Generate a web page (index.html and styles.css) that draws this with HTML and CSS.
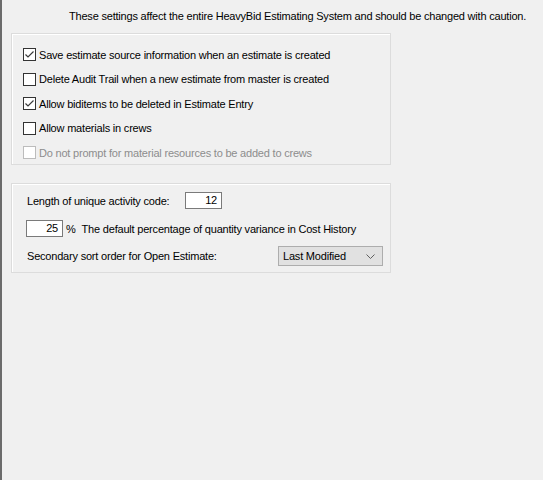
FILE: index.html
```html
<!DOCTYPE html>
<html>
<head>
<meta charset="utf-8">
<link rel="stylesheet" href="styles.css">
</head>
<body>
<div class="page">
  <div class="notice">These settings affect the entire HeavyBid Estimating System and should be changed with caution.</div>

  <div class="group group-checks">
    <label class="check"><span class="box checked"><svg width="11" height="11" viewBox="0 0 11 11"><path d="M1.5 5.5 L4 8 L9.5 2.5" fill="none" stroke="#3a3a3a" stroke-width="1.2"/></svg></span><span>Save estimate source information when an estimate is created</span></label>
    <label class="check"><span class="box"></span><span>Delete Audit Trail when a new estimate from master is created</span></label>
    <label class="check"><span class="box checked"><svg width="11" height="11" viewBox="0 0 11 11"><path d="M1.5 5.5 L4 8 L9.5 2.5" fill="none" stroke="#3a3a3a" stroke-width="1.2"/></svg></span><span>Allow biditems to be deleted in Estimate Entry</span></label>
    <label class="check"><span class="box"></span><span>Allow materials in crews</span></label>
    <label class="check disabled"><span class="box"></span><span>Do not prompt for material resources to be added to crews</span></label>
  </div>

  <div class="group group-fields">
    <div class="row row-code">
      <span class="label">Length of unique activity code:</span>
      <span class="textbox tb-code">12</span>
    </div>
    <div class="row row-pct">
      <span class="textbox tb-pct">25</span>
      <span class="pct">%</span>
      <span class="label">The default percentage of quantity variance in Cost History</span>
    </div>
    <div class="row row-sort">
      <span class="label">Secondary sort order for Open Estimate:</span>
      <span class="select">Last Modified<svg class="chev" width="9" height="5" viewBox="0 0 9 5"><path d="M0.5 0.5 L4.5 4.5 L8.5 0.5" fill="none" stroke="#606060" stroke-width="1"/></svg></span>
    </div>
  </div>
</div>
</body>
</html>
```

FILE: styles.css
```css
html, body {
  margin: 0;
  padding: 0;
  background: #f0f0f0;
}
body {
  font-family: "Liberation Sans", Arial, sans-serif;
  font-size: 11px;
  letter-spacing: -0.2px;
  color: #000;
}
.page {
  width: 541px;
  height: 480px;
  border-left: 2px solid #6b6b6b;
  box-sizing: border-box;
  padding-top: 9px;
}
.notice {
  padding-left: 67px;
  height: 14px;
  line-height: 14px;
  white-space: nowrap;
}
.group {
  margin-left: 9px;
  width: 380px;
  box-sizing: border-box;
  border: 1px solid #dcdcdc;
  box-shadow: inset 1px 1px 0 #fff;
}
.group-checks {
  margin-top: 10px;
  height: 132px;
  padding: 14px 0 0 11px;
}
.check {
  display: flex;
  align-items: center;
  height: 13px;
  margin-bottom: 11.5px;
  gap: 3px;
  white-space: nowrap;
}
.box {
  width: 13px;
  height: 13px;
  box-sizing: border-box;
  border: 1px solid #333;
  background: #fff;
  display: flex;
  align-items: center;
  justify-content: center;
}
.check.disabled {
  color: #8d8d8d;
}
.check.disabled .box {
  border-color: #bcbcbc;
}
.group-fields {
  margin-top: 18px;
  height: 90px;
  padding: 8px 0 0 15px;
}
.row {
  display: flex;
  align-items: center;
  white-space: nowrap;
}
.row-code {
  height: 17px;
}
.row-code .label {
  width: 158px;
}
.textbox {
  display: block;
  box-sizing: border-box;
  height: 17px;
  line-height: 15px;
  border: 1px solid #7a7a7a;
  background: #fff;
  text-align: right;
  padding-right: 4px;
}
.tb-code {
  width: 37px;
}
.row-pct {
  margin-top: 11px;
  margin-left: -1px;
  height: 17px;
}
.tb-pct {
  width: 37px;
}
.pct {
  margin-left: 3px;
  margin-right: 6px;
}
.row-sort {
  margin-top: 9px;
  height: 20px;
}
.row-sort .label {
  width: 251px;
}
.select {
  display: flex;
  align-items: center;
  justify-content: space-between;
  box-sizing: border-box;
  width: 105px;
  height: 20px;
  border: 1px solid #adadad;
  background: #e1e1e1;
  padding: 0 7px 0 4px;
}
```
